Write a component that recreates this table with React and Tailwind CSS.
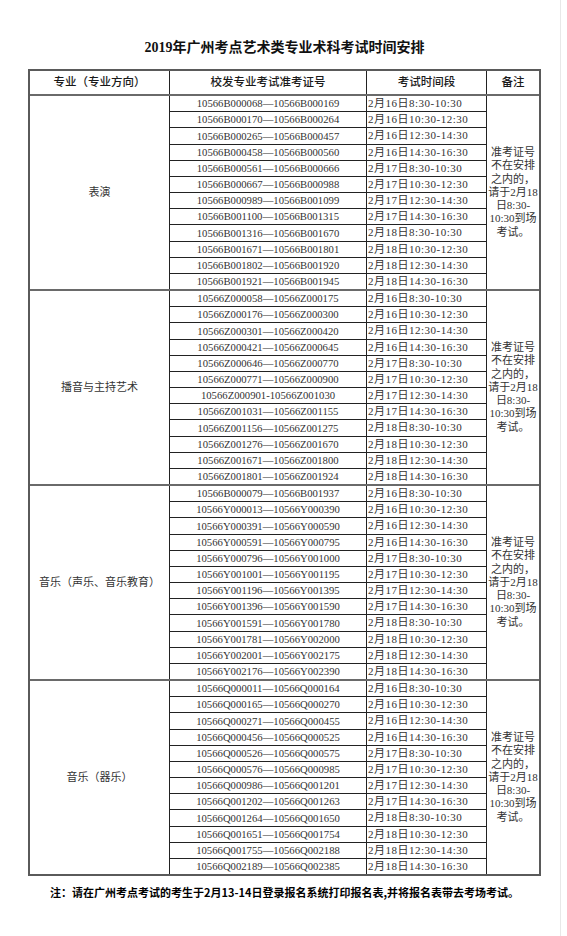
import React from "react";

const times = [
  "2月16日8:30-10:30",
  "2月16日10:30-12:30",
  "2月16日12:30-14:30",
  "2月16日14:30-16:30",
  "2月17日8:30-10:30",
  "2月17日10:30-12:30",
  "2月17日12:30-14:30",
  "2月17日14:30-16:30",
  "2月18日8:30-10:30",
  "2月18日10:30-12:30",
  "2月18日12:30-14:30",
  "2月18日14:30-16:30",
];

const sections = [
  {
    label: "表演",
    ids: [
      "10566B000068—10566B000169",
      "10566B000170—10566B000264",
      "10566B000265—10566B000457",
      "10566B000458—10566B000560",
      "10566B000561—10566B000666",
      "10566B000667—10566B000988",
      "10566B000989—10566B001099",
      "10566B001100—10566B001315",
      "10566B001316—10566B001670",
      "10566B001671—10566B001801",
      "10566B001802—10566B001920",
      "10566B001921—10566B001945",
    ],
  },
  {
    label: "播音与主持艺术",
    ids: [
      "10566Z000058—10566Z000175",
      "10566Z000176—10566Z000300",
      "10566Z000301—10566Z000420",
      "10566Z000421—10566Z000645",
      "10566Z000646—10566Z000770",
      "10566Z000771—10566Z000900",
      "10566Z000901-10566Z001030",
      "10566Z001031—10566Z001155",
      "10566Z001156—10566Z001275",
      "10566Z001276—10566Z001670",
      "10566Z001671—10566Z001800",
      "10566Z001801—10566Z001924",
    ],
  },
  {
    label: "音乐（声乐、音乐教育）",
    ids: [
      "10566B000079—10566B001937",
      "10566Y000013—10566Y000390",
      "10566Y000391—10566Y000590",
      "10566Y000591—10566Y000795",
      "10566Y000796—10566Y001000",
      "10566Y001001—10566Y001195",
      "10566Y001196—10566Y001395",
      "10566Y001396—10566Y001590",
      "10566Y001591—10566Y001780",
      "10566Y001781—10566Y002000",
      "10566Y002001—10566Y002175",
      "10566Y002176—10566Y002390",
    ],
  },
  {
    label: "音乐（器乐）",
    ids: [
      "10566Q000011—10566Q000164",
      "10566Q000165—10566Q000270",
      "10566Q000271—10566Q000455",
      "10566Q000456—10566Q000525",
      "10566Q000526—10566Q000575",
      "10566Q000576—10566Q000985",
      "10566Q000986—10566Q001201",
      "10566Q001202—10566Q001263",
      "10566Q001264—10566Q001650",
      "10566Q001651—10566Q001754",
      "10566Q001755—10566Q002188",
      "10566Q002189—10566Q002385",
    ],
  },
];

const remarkLines = [
  "准考证号",
  "不在安排",
  "之内的，",
  "请于2月18",
  "日8:30-",
  "10:30到场",
  "考试。",
];

const Remark = () => (
  <div className="flex flex-1 flex-col items-center justify-center text-center text-[11px] leading-[13.3px] text-[#333]">
    {remarkLines.map((line) => (
      <span key={line} className="block whitespace-nowrap">
        {line}
      </span>
    ))}
  </div>
);

const Section = ({ section, first }) => (
  <div
    className={
      first
        ? "flex h-[193px]"
        : "flex h-[195px] border-t-2 border-[#6a6a6a]"
    }
  >
    {/* major name */}
    <div className="flex w-[140px] items-center justify-center border-r border-[#222] text-[11px] text-[#333]">
      {section.label}
    </div>

    {/* id ranges + times */}
    <div className="flex w-[317px] flex-col">
      {section.ids.map((id, i) => (
        <div
          key={id}
          className={
            i === 0 ? "flex flex-1" : "flex flex-1 border-t border-[#222]"
          }
        >
          <div className="flex w-[197px] items-center justify-center whitespace-nowrap border-r border-[#222] text-[10.7px] leading-none text-[#333]">
            {id}
          </div>
          <div className="flex w-[120px] items-center whitespace-nowrap border-r border-[#222] pl-[1px] text-[11px] leading-none tracking-[0.5px] text-[#333]">
            {times[i]}
          </div>
        </div>
      ))}
    </div>

    <Remark />
  </div>
);

export default function App() {
  return (
    <div className="h-[936px] w-[567px] overflow-hidden bg-white font-['Liberation_Serif','Noto_Sans_CJK_SC',serif]">
      <div className="h-full w-[561px] border-r border-[#e8e8e8] pt-[38px]">
        {/* title */}
        <div className="ml-[28px] h-[20px] w-[513px] text-center text-[14px] font-semibold leading-[20px] text-[#111]">
          2019年广州考点艺术类专业术科考试时间安排
        </div>

        {/* table */}
        <div className="ml-[28px] mt-[11px] w-[513px] border-2 border-[#5a5a5a]">
          <div className="flex h-[25px] border-b-2 border-[#6a6a6a] text-[11.5px] font-medium text-[#1a1a1a]">
            <div className="flex w-[140px] items-center justify-center border-r border-[#222]">
              专业（专业方向）
            </div>
            <div className="flex w-[197px] items-center justify-center border-r border-[#222]">
              校发专业考试准考证号
            </div>
            <div className="flex w-[120px] items-center justify-center border-r border-[#222]">
              考试时间段
            </div>
            <div className="flex flex-1 items-center justify-center">备注</div>
          </div>

          {sections.map((s, i) => (
            <Section key={s.label} section={s} first={i === 0} />
          ))}
        </div>

        {/* footnote */}
        <p className="ml-[50px] mt-[9px] whitespace-nowrap font-['Noto_Sans_CJK_SC',sans-serif] text-[11px] font-bold leading-[14px] text-black">
          注：请在广州考点考试的考生于2月13-14日登录报名系统打印报名表,并将报名表带去考场考试。
        </p>
      </div>
    </div>
  );
}
